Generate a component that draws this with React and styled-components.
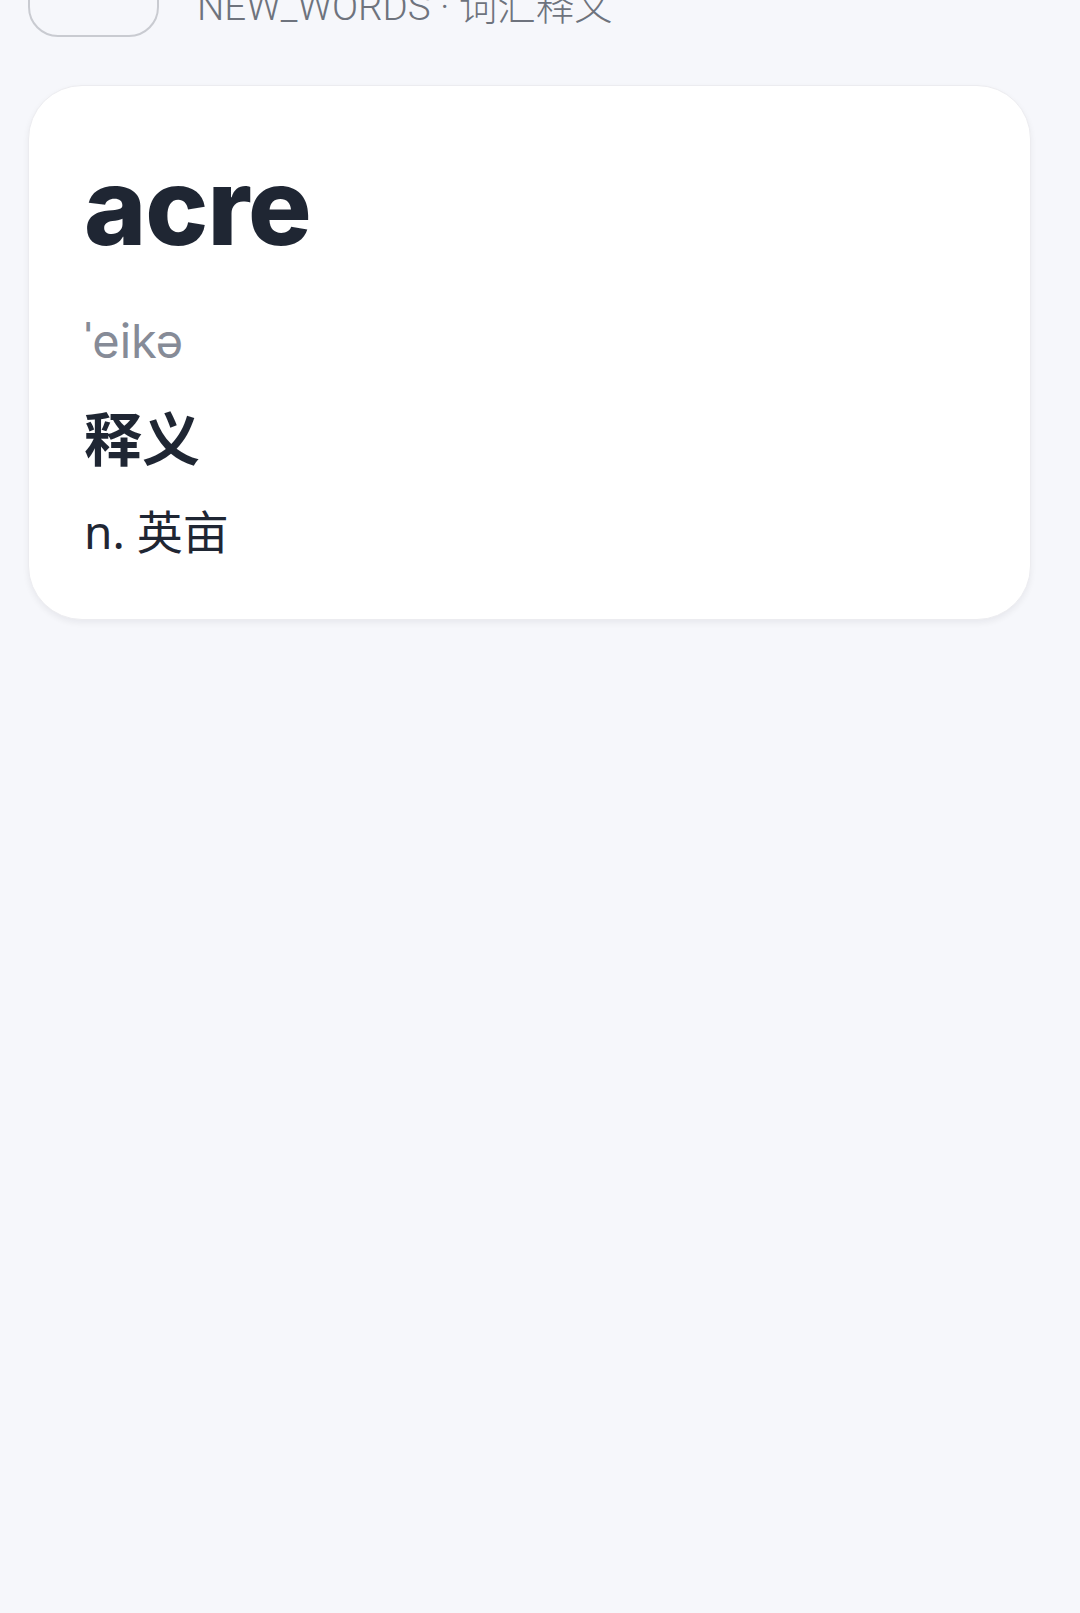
import React from 'react';
import styled, { createGlobalStyle } from 'styled-components';

const GlobalStyle = createGlobalStyle`
  html, body {
    margin: 0;
    padding: 0;
    background: #f6f7fb;
  }
  body {
    font-family: Inter, "Noto Sans", "Noto Sans CJK SC", sans-serif;
    overflow: hidden;
  }
`;

const Page = styled.div`
  min-height: 1613px;
  padding: 0 48px 0 28px;
  box-sizing: border-box;
  background: #f6f7fb;
`;

const Header = styled.header`
  display: flex;
  align-items: flex-end;
  gap: 38px;
  margin-top: -58px;
`;

const BackButton = styled.button`
  width: 131px;
  height: 95px;
  border: 2px solid #c9cbd1;
  border-radius: 30px;
  background: transparent;
  flex-shrink: 0;
`;

const Title = styled.h1`
  margin: 0 0 11px;
  font-size: 38.5px;
  line-height: 1;
  font-weight: 300;
  color: #6e737d;
  font-family: Roboto, "Noto Sans CJK SC", sans-serif;
  white-space: nowrap;
`;

const Card = styled.section`
  margin-top: 48px;
  width: 1003px;
  box-sizing: border-box;
  background: #ffffff;
  border: 1px solid #ececf0;
  border-radius: 54px;
  box-shadow: 0 3px 6px rgba(20, 24, 40, 0.06);
  padding: 68px 55px 63px;
`;

const Word = styled.h2`
  margin: 0;
  font-size: 106px;
  line-height: 1;
  font-weight: 800;
  color: #1f2633;
  letter-spacing: -1px;
`;

const Phonetic = styled.div`
  margin-top: 57px;
  font-size: 47px;
  line-height: 1;
  color: #868b97;
`;

const SectionLabel = styled.h3`
  margin: 41px 0 0;
  font-family: "Noto Sans CJK SC", sans-serif;
  font-size: 58px;
  line-height: 1.1;
  font-weight: 700;
  color: #1f2633;
`;

const Meaning = styled.p`
  margin: 37px 0 0;
  font-family: "Noto Sans", "Noto Sans CJK SC", sans-serif;
  font-size: 46px;
  line-height: 1.1;
  color: #1f2633;
`;

export default function App() {
  return (
    <>
      <GlobalStyle />
      <Page>
        <Header>
          <BackButton aria-label="back" />
          <Title>NEW_WORDS · 词汇释义</Title>
        </Header>
        <Card>
          <Word>acre</Word>
          <Phonetic>ˈeikə</Phonetic>
          <SectionLabel>释义</SectionLabel>
          <Meaning>n. 英亩</Meaning>
        </Card>
      </Page>
    </>
  );
}
